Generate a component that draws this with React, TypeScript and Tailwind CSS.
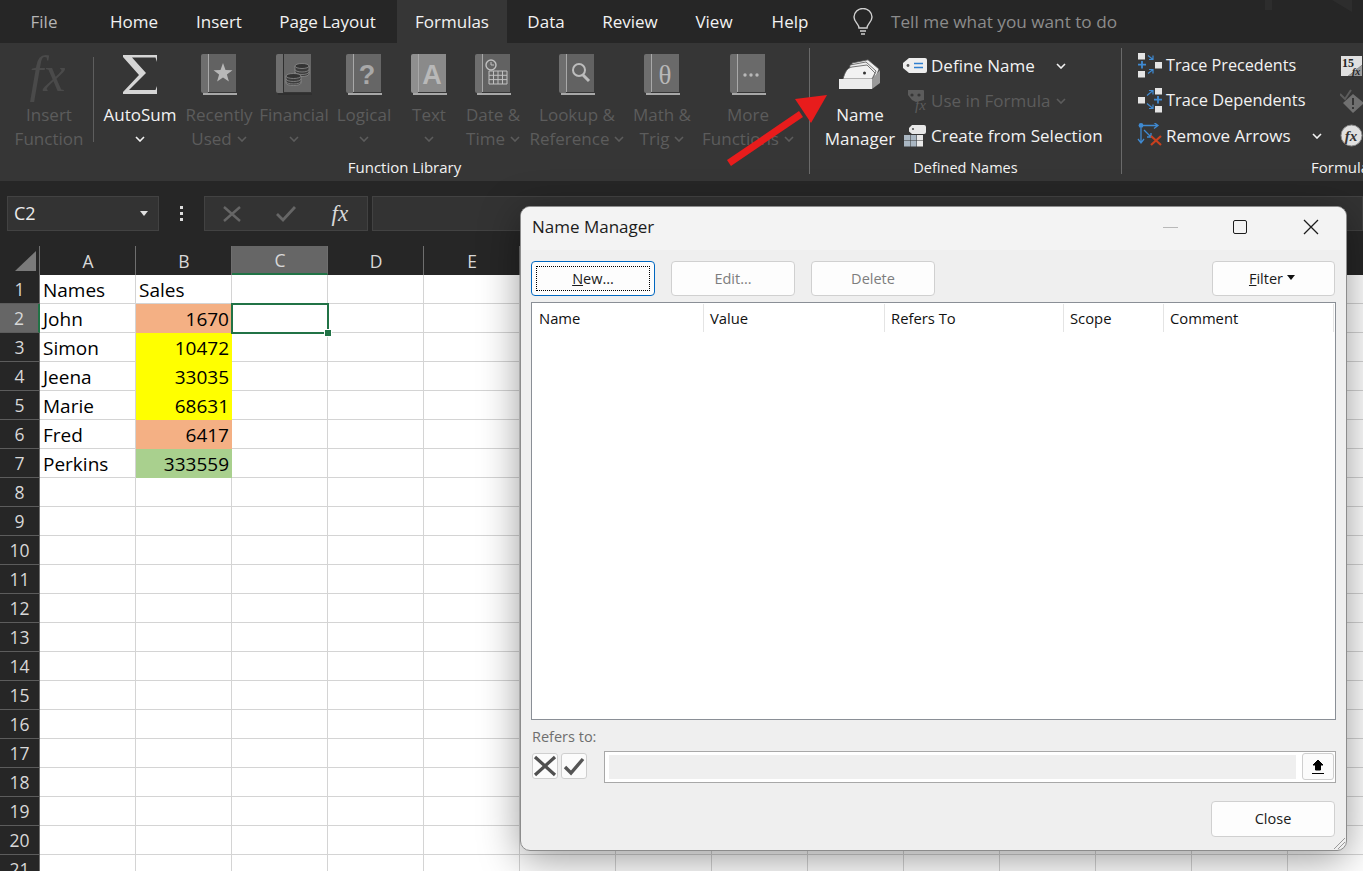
import React from "react";

const Chev = ({ c = "#e8e8e8", className = "" }: { c?: string; className?: string }) => (
  <svg width="10" height="6" viewBox="0 0 10 6" className={className} fill="none">
    <path d="M1 1l4 4 4-4" stroke={c} strokeWidth="1.6" />
  </svg>
);

const Book = ({ fill = "#626262", strip = "#6e6e6e", line = "#a8a8a8", children }: { fill?: string; strip?: string; line?: string; children?: React.ReactNode }) => (
  <svg width="36" height="41" viewBox="0 0 36 41">
    <path d="M8 0h27v38H8z" fill={fill} />
    <path d="M2 0h5v39H2a2 2 0 0 1-2-2V2a2 2 0 0 1 2-2z" fill={strip} />
    <rect x="7" y="0" width="1" height="38" fill={line} />
    <rect x="2" y="39" width="34" height="2" fill={line} />
    {children}
  </svg>
);

const BigBtn = ({ w, icon, lines, chev, dis = true }: { w: string; icon: React.ReactNode; lines: string[]; chev?: "inline" | "below"; dis?: boolean }) => {
  const color = dis ? "text-[#5c5c5c]" : "text-[#f2f2f2]";
  const cc = dis ? "#5c5c5c" : "#f2f2f2";
  return (
    <div className={`${w} shrink-0 flex flex-col items-center pt-[11px]`}>
      <div className="h-[41px] flex items-center justify-center mb-[8px]">{icon}</div>
      <div className={`text-[17px] leading-[24px] whitespace-nowrap ${color}`}>{lines[0]}</div>
      {lines[1] ? (
        <div className={`text-[17px] leading-[24px] whitespace-nowrap flex items-center gap-[5px] ${color}`}>
          {lines[1]}
          {chev === "inline" ? <Chev c={cc} /> : null}
        </div>
      ) : null}
      {chev === "below" ? (
        <div className="h-[24px] flex items-center">
          <Chev c={cc} />
        </div>
      ) : null}
    </div>
  );
};

const tabs: [string, string, string][] = [
  ["File", "w-[88px]", "text-[#b4b4b4]"],
  ["Home", "w-[92px]", "text-[#f2f2f2]"],
  ["Insert", "w-[78px]", "text-[#f2f2f2]"],
  ["Page Layout", "w-[139px]", "text-[#f2f2f2]"],
  ["Formulas", "w-[110px] bg-[#363636]", "text-[#f2f2f2]"],
  ["Data", "w-[78px]", "text-[#f2f2f2]"],
  ["Review", "w-[90px]", "text-[#f2f2f2]"],
  ["View", "w-[78px]", "text-[#f2f2f2]"],
  ["Help", "w-[74px]", "text-[#f2f2f2]"],
];

const SmallRow = ({ icon, label, dis, chevGap, size = "text-[17px]" }: { icon: React.ReactNode; label: string; dis?: boolean; chevGap?: string; size?: string }) => (
  <div className="h-[35px] flex items-center">
    <div className="w-[28px] h-[26px] shrink-0 flex items-center">{icon}</div>
    <span className={`${size} whitespace-nowrap ${dis ? "text-[#5c5c5c]" : "text-[#f2f2f2]"}`}>{label}</span>
    {chevGap ? <Chev c={dis ? "#5c5c5c" : "#f2f2f2"} className={chevGap} /> : null}
  </div>
);

const Sq = ({ x, y }: { x: number; y: number }) => <rect x={x} y={y} width="7" height="6.5" fill="#e4e4e4" />;

const TracePrec = () => (
  <svg width="26" height="26" viewBox="0 0 26 26" fill="none">
    <Sq x={1} y={0} />
    <Sq x={18} y={9} />
    <Sq x={1} y={18} />
    <path d="M5 8v7.500M1 11.700h8" stroke="#3f8ad2" strokeWidth="1.8" />
    <path d="M11 2.500l5 4M16 2.500v4h-4M11 20.500l5-4M16 20.500v-4h-4" stroke="#3f8ad2" strokeWidth="1.2" />
  </svg>
);
const TraceDep = () => (
  <svg width="26" height="26" viewBox="0 0 26 26" fill="none">
    <Sq x={18} y={0} />
    <Sq x={1} y={9} />
    <Sq x={18} y={18} />
    <path d="M21 8v7.500M17 11.700h8" stroke="#3f8ad2" strokeWidth="1.8" />
    <path d="M10 7.500l6-5M12 2.500h4v4M10 15.500l6 5M12 20.500h4v-4" stroke="#3f8ad2" strokeWidth="1.2" />
  </svg>
);
const RemoveArrows = () => (
  <svg width="26" height="26" viewBox="0 0 26 26" fill="none">
    <circle cx="4" cy="2.500" r="2.400" fill="#3f8ad2" />
    <path d="M4 2.500h17M17 -.5l4 3-4 3M4 5v14.500M1 16l3 4 3-4M7 7l7 7M14 10v4h-4" stroke="#3f8ad2" strokeWidth="1.3" />
    <path d="M14 13l10 9M24 13l-10 9" stroke="#c8401e" strokeWidth="2.200" />
  </svg>
);
const DefineIcon = () => (
  <svg width="24" height="15" viewBox="0 0 24 15" fill="none">
    <path d="M6 0h16a2 2 0 0 1 2 2v11a2 2 0 0 1-2 2H6L0 10V5z" fill="#eeeeee" />
    <circle cx="5" cy="7.500" r="1.400" fill="#555" />
    <path d="M11 5.500h9M11 9.500h9" stroke="#2f7fd0" strokeWidth="1.400" />
  </svg>
);
const UseIcon = () => (
  <svg width="24" height="26" viewBox="0 0 24 26" fill="none">
    <path d="M5 2h15a1 1 0 0 1 1 1v9l-8 2-4-2-4-5z" fill="#5c5c5c" />
    <circle cx="9" cy="7" r="1.600" fill="#363636" />
    <circle cx="16" cy="7" r="1.600" fill="#363636" />
    <text x="12" y="22" fontSize="15" fontStyle="italic" fill="#5c5c5c" fontFamily="Liberation Serif, serif">fx</text>
  </svg>
);
const CreateIcon = () => (
  <svg width="23" height="22" viewBox="0 0 23 22" fill="none">
    <path d="M9 0h12a2 2 0 0 1 2 2v5a2 2 0 0 1-2 2H9L6 6.500V3z" fill="#e8e8e8" />
    <circle cx="10" cy="4" r="1.100" fill="#555" />
    <rect x="1" y="10" width="6" height="5.500" fill="#a9b6c2" />
    <rect x="1" y="16" width="6" height="5.500" fill="#a9b6c2" />
    <rect x="7.500" y="10" width="6" height="5.500" fill="#a9b6c2" />
    <rect x="7.500" y="16" width="6" height="5.500" fill="#a9b6c2" />
    <rect x="14" y="10" width="6" height="5.500" fill="#e8e8e8" />
    <rect x="14" y="16" width="6" height="5.500" fill="#e8e8e8" />
  </svg>
);

const Ribbon = () => (
  <div className="h-[138px] bg-[#363636] flex" style={{ fontFamily: '"Open Sans", sans-serif' }}>
    <div className="w-[809px] shrink-0 flex flex-col">
      <div className="h-[113px] flex pl-[12px]">
        <BigBtn
          w="w-[74px]"
          lines={["Insert", "Function"]}
          icon={<span className="text-[50px] leading-[41px] italic text-[#4a4a4a] mr-[3px]" style={{ fontFamily: '"Liberation Serif", serif' }}>fx</span>}
        />
        <div className="ml-[7px] mr-[6px] mt-[14px] w-px h-[85px] bg-[#5e5e5e]" />
        <BigBtn
          w="w-[80px]"
          dis={false}
          chev="below"
          lines={["AutoSum"]}
          icon={
            <svg width="34" height="39" viewBox="0 0 34 39">
              <path d="M0 0H34V7L32.500 2.500H9L23 18L6 35H32.500L34 31V39H0V37L16 20L0 2Z" fill="#d6d6d6" />
            </svg>
          }
        />
        <BigBtn
          w="w-[78px]"
          chev="inline"
          lines={["Recently", "Used"]}
          icon={
            <Book>
              <path d="M22 9l2.500 7 7 .2-5.600 4.300 2 7-5.900-4.100-5.900 4.100 2-7-5.600-4.300 7-.2z" fill="#b8b8b8" />
            </Book>
          }
        />
        <BigBtn
          w="w-[72px]"
          chev="below"
          lines={["Financial"]}
          icon={
            <Book line="#2f2f2f" fill="#666666">
              <g stroke="#8c8c8c" strokeWidth=".8">
                <path d="M19 12v8a7 2.500 0 0 0 14 0v-8z" fill="#3c3c3c" />
                <ellipse cx="26" cy="12" rx="7" ry="2.500" fill="#333" />
                <path d="M19 15.500a7 2.500 0 0 0 14 0M19 18a7 2.500 0 0 0 14 0" fill="none" />
                <path d="M10 22v7a7.500 2.500 0 0 0 15 0v-7z" fill="#3c3c3c" />
                <ellipse cx="17.500" cy="22" rx="7.500" ry="2.500" fill="#333" />
                <path d="M10 25a7.500 2.500 0 0 0 15 0M10 27.500a7.500 2.500 0 0 0 15 0" fill="none" />
              </g>
            </Book>
          }
        />
        <BigBtn
          w="w-[68px]"
          chev="below"
          lines={["Logical"]}
          icon={
            <Book fill="#666666">
              <text x="21" y="30" textAnchor="middle" fontSize="27" fontWeight="700" fill="#a8a8a8" fontFamily="Liberation Sans, sans-serif">?</text>
            </Book>
          }
        />
        <BigBtn
          w="w-[62px]"
          chev="below"
          lines={["Text"]}
          icon={
            <Book fill="#8a8a8a" strip="#8f8f8f">
              <text x="21" y="30" textAnchor="middle" fontSize="27" fontWeight="700" fill="#b8b8b8" fontFamily="Liberation Sans, sans-serif">A</text>
            </Book>
          }
        />
        <BigBtn
          w="w-[66px]"
          chev="inline"
          lines={["Date &", "Time"]}
          icon={
            <Book>
              <circle cx="16" cy="11" r="5" fill="#666" stroke="#c0c0c0" strokeWidth="1.400" />
              <path d="M16 8v3h3" stroke="#c0c0c0" strokeWidth="1" fill="none" />
              <path d="M14 17h18v13H14zM14 21.300h18M14 25.600h18M18.500 17v13M23 17v13M27.500 17v13" stroke="#c0c0c0" strokeWidth="1" fill="#666" />
            </Book>
          }
        />
        <BigBtn
          w="w-[102px]"
          chev="inline"
          lines={["Lookup &", "Reference"]}
          icon={
            <Book>
              <circle cx="20" cy="16" r="6" fill="none" stroke="#bdbdbd" strokeWidth="2" />
              <path d="M24 21l6 6" stroke="#bdbdbd" strokeWidth="3" />
            </Book>
          }
        />
        <BigBtn
          w="w-[68px]"
          chev="inline"
          lines={["Math &", "Trig"]}
          icon={
            <Book fill="#6a6a6a">
              <text x="21" y="30" textAnchor="middle" fontSize="27" fill="#b8b8b8" fontFamily="Liberation Serif, serif">θ</text>
            </Book>
          }
        />
        <BigBtn
          w="w-[104px]"
          chev="inline"
          lines={["More", "Functions"]}
          icon={
            <Book fill="#6a6a6a">
              <circle cx="15" cy="21" r="1.700" fill="#b8b8b8" />
              <circle cx="21" cy="21" r="1.700" fill="#b8b8b8" />
              <circle cx="27" cy="21" r="1.700" fill="#b8b8b8" />
            </Book>
          }
        />
      </div>
      <div className="h-[24px] -mt-px text-center text-[15px] leading-[24px] text-[#f2f2f2]">Function Library</div>
    </div>
    <div className="mt-[5px] w-px h-[126px] bg-[#6a6a6a] shrink-0" />
    <div className="w-[311px] shrink-0 flex flex-col">
      <div className="h-[113px] flex pl-[7px]">
        <BigBtn
          w="w-[86px]"
          dis={false}
          lines={["Name", "Manager"]}
          icon={
            <svg width="42" height="31" viewBox="0 0 42 31">
              <path d="M13 4L29 .8 40 10l-3 8H12z" fill="#eeeeee" stroke="#555" strokeWidth=".8" />
              <path d="M11 6l16-3 10 9-3 7H10z" fill="#eeeeee" stroke="#555" strokeWidth=".8" />
              <path d="M4 20C6 13 8 9 13 8l15-2 8 8-3 6z" fill="#f2f2f2" stroke="#555" strokeWidth=".8" />
              <circle cx="25.500" cy="14" r="1.500" fill="#333" />
              <path d="M0 20h33v10H0z" fill="#ececec" />
              <path d="M33 20l8-9v13l-8 6z" fill="#9a9a9a" />
            </svg>
          }
        />
        <div className="pt-[5px]">
          <SmallRow icon={<DefineIcon />} label="Define Name" chevGap="ml-[21px]" />
          <SmallRow icon={<UseIcon />} label="Use in Formula" dis chevGap="ml-[6px]" />
          <SmallRow icon={<CreateIcon />} label="Create from Selection" />
        </div>
      </div>
      <div className="h-[24px] text-center text-[14.5px] leading-[24px] text-[#f2f2f2]">Defined Names</div>
    </div>
    <div className="mt-[5px] w-px h-[126px] bg-[#6a6a6a] shrink-0" />
    <div className="flex-1 min-w-0 overflow-hidden flex flex-col">
      <div className="h-[113px] flex pl-[15px] pt-[5px]">
        <div className="w-[203px] shrink-0">
          <SmallRow icon={<span className="block mr-[-1px]"><TracePrec /></span>} label="Trace Precedents" size="text-[16.2px] pl-px" />
          <SmallRow icon={<span className="block mr-[-1px]"><TraceDep /></span>} label="Trace Dependents" size="text-[16.4px] pl-px" />
          <SmallRow icon={<span className="block mr-[-1px]"><RemoveArrows /></span>} label="Remove Arrows" chevGap="ml-[21px]" size="text-[17px] pl-px" />
        </div>
        <div className="flex flex-col shrink-0">
          <div className="h-[35px] flex items-center">
            <svg width="22" height="22" viewBox="0 0 22 22">
              <path d="M1 1h21v9L8 21H1z" fill="#e0e0e0" />
              <path d="M22 10v11H8z" fill="#9a9a9a" />
              <text x="2" y="12" fontSize="12" fontWeight="700" fill="#222" fontFamily="Liberation Serif, serif">15</text>
              <text x="12" y="20" fontSize="10" fontStyle="italic" fontWeight="700" fill="#222" fontFamily="Liberation Serif, serif">fx</text>
            </svg>
          </div>
          <div className="h-[35px] flex items-center">
            <svg width="24" height="24" viewBox="0 0 24 24" fill="none">
              <path d="M0 5l5 5 6-9" stroke="#5c5c5c" strokeWidth="2" />
              <path d="M13 5l11 9-11 10-10-10z" fill="#707070" />
              <path d="M13 9v7M13 18v2" stroke="#363636" strokeWidth="2" />
            </svg>
          </div>
          <div className="h-[35px] flex items-center">
            <svg width="23" height="23" viewBox="0 0 23 23">
              <circle cx="11.500" cy="11.500" r="10.500" fill="#e0e0e0" stroke="#8a8a8a" />
              <text x="11" y="17" textAnchor="middle" fontSize="15" fontStyle="italic" fontWeight="700" fill="#333" fontFamily="Liberation Serif, serif">fx</text>
            </svg>
          </div>
        </div>
      </div>
      <div className="h-[24px] -mt-px pl-[189px] text-[15px] leading-[24px] text-[#f2f2f2] whitespace-nowrap">Formula Auditing</div>
    </div>
  </div>
);

const FormulaBar = () => (
  <div className="h-[65px] bg-[#262626] flex pt-[15px] pl-[7px]" style={{ fontFamily: '"Open Sans", sans-serif' }}>
    <div className="w-[152px] h-[35px] bg-[#333333] border border-[#424242] flex items-center pl-[6px] pr-[10px] justify-between">
      <span className="text-[18px] text-[#ececec]">C2</span>
      <svg width="8" height="5" viewBox="0 0 8 5"><path d="M0 0h8L4 5z" fill="#e0e0e0" /></svg>
    </div>
    <div className="w-[45px] h-[35px] flex flex-col items-center justify-center gap-[3px]">
      <span className="w-[3px] h-[3px] bg-[#ddd]" />
      <span className="w-[3px] h-[3px] bg-[#ddd]" />
      <span className="w-[3px] h-[3px] bg-[#ddd]" />
    </div>
    <div className="w-[164px] h-[35px] bg-[#333333] border border-[#424242] flex items-center">
      <div className="w-[55px] flex justify-center">
        <svg width="18" height="16" viewBox="0 0 18 16"><path d="M1 1l16 14M17 1L1 15" stroke="#666" strokeWidth="2.400" /></svg>
      </div>
      <div className="w-[54px] flex justify-center">
        <svg width="20" height="16" viewBox="0 0 20 16" fill="none"><path d="M1 8l6 6L19 1" stroke="#666" strokeWidth="2.800" /></svg>
      </div>
      <div className="w-[55px] text-center text-[23px] leading-[24px] italic text-[#d8d8d8]" style={{ fontFamily: '"Liberation Serif", serif' }}>fx</div>
    </div>
    <div className="ml-[4px] flex-1 h-[35px] bg-[#333333] border border-[#424242]" />
  </div>
);

const cols = "ABCDEFGHIJKLMNO".split("");
const data: Record<number, [string, string, string]> = {
  1: ["Names", "Sales", ""],
  2: ["John", "1670", "bg-[#f4b084]"],
  3: ["Simon", "10472", "bg-[#ffff00]"],
  4: ["Jeena", "33035", "bg-[#ffff00]"],
  5: ["Marie", "68631", "bg-[#ffff00]"],
  6: ["Fred", "6417", "bg-[#f4b084]"],
  7: ["Perkins", "333559", "bg-[#a9d08e]"],
};
const rows = Array.from({ length: 21 }, (_, i) => i + 1);

const Sheet = () => (
  <div className="bg-white" style={{ fontFamily: '"Open Sans", sans-serif' }}>
    <div className="flex h-[29px] bg-[#262626]">
      <div className="w-[40px] shrink-0 relative border-r border-[#6e6e6e]">
        <svg className="absolute left-[15px] top-[5px]" width="21" height="20" viewBox="0 0 21 20"><path d="M21 0v20H0z" fill="#7a7a7a" /></svg>
      </div>
      {cols.map((c) => (
        <div
          key={c}
          className={`w-[96px] shrink-0 flex items-center justify-center pl-px pt-[2px] text-[17.5px] text-[#d8d8d8] border-r border-[#6e6e6e] ${c === "C" ? "bg-[#666666] border-b-2 border-b-[#217346]" : ""}`}
        >
          {c}
        </div>
      ))}
    </div>
    {rows.map((r) => {
      const d = data[r];
      return (
        <div key={r} className="flex h-[29px]">
          <div className={`w-[40px] shrink-0 flex items-center justify-center pt-px text-[17.5px] text-[#d8d8d8] border-r border-b border-b-[#5c5c5c] ${r === 2 ? "bg-[#666666] border-r-2 border-r-[#217346]" : "bg-[#262626] border-r-[#6e6e6e]"}`}>
            {r}
          </div>
          {cols.map((c, i) => (
            <div
              key={c}
              className={`relative w-[96px] shrink-0 flex items-center pt-[2px] text-[19px] text-black border-b border-r border-[#d4d4d4] ${i === 1 && r > 1 && d ? `${d[2]} justify-end pr-[2px] border-r-transparent border-b-transparent` : "pl-[3px]"}`}
            >
              {d && i === 0 ? d[0] : null}
              {d && i === 1 ? d[1] : null}
              {r === 2 && c === "C" ? (
                <div className="absolute z-10 left-[-1px] top-[-1px] w-[98px] h-[31px] border-2 border-[#217346]">
                  <div className="absolute right-[-4px] bottom-[-4px] w-[6px] h-[6px] bg-[#217346] outline outline-white" />
                </div>
              ) : null}
            </div>
          ))}
        </div>
      );
    })}
  </div>
);

const WinBtn = ({ label, dis, blue, w = "w-[124px]" }: { label: React.ReactNode; dis?: boolean; blue?: boolean; w?: string }) => (
  <div className={`${w} h-[35px] rounded-[4px] bg-[#fdfdfd] flex items-center justify-center text-[14.5px] ${blue ? "border border-[#0067c0] p-[4px]" : "border border-[#d0d0d0]"} ${dis ? "text-[#7d7d7d]" : "text-[#1a1a1a]"}`}>
    {blue ? <div className="w-full h-full border border-dotted border-black flex items-center justify-center">{label}</div> : label}
  </div>
);

const headers: [string, string][] = [
  ["Name", "w-[165px]"],
  ["Value", "w-[181px] pl-[6px]"],
  ["Refers To", "w-[179px] pl-[6px]"],
  ["Scope", "w-[100px] pl-[6px]"],
  ["Comment", "w-[170px] pl-[6px]"],
];

const Dialog = () => (
  <div
    className="absolute left-[520px] top-[206px] w-[827px] h-[645px] rounded-[10px] bg-[#efefef] border border-[#8c8c8c] shadow-[0_8px_40px_rgba(0,0,0,0.4)] overflow-hidden flex flex-col"
    style={{ fontFamily: '"Open Sans", sans-serif' }}
  >
    <div className="h-[43px] shrink-0 bg-[#f3f3f3] flex items-center pl-[11px] pb-[3px]">
      <span className="text-[17px] text-[#1c1c1c] flex-1">Name Manager</span>
      <div className="w-[15px] h-px bg-[#b8b8b8] mr-[55px]" />
      <div className="w-[14px] h-[14px] border-[1.5px] border-[#1c1c1c] rounded-[2px] mr-[56px]" />
      <svg width="16" height="16" viewBox="0 0 16 16" className="mr-[27px]"><path d="M1 1l14 14M15 1L1 15" stroke="#1c1c1c" strokeWidth="1.300" /></svg>
    </div>
    <div className="flex-1 px-[10px] pt-[11px] flex flex-col">
      <div className="flex h-[35px]">
        <WinBtn blue label={<span><span className="underline">N</span>ew...</span>} />
        <div className="w-[16px]" />
        <WinBtn dis label="Edit..." />
        <div className="w-[16px]" />
        <WinBtn dis label="Delete" />
        <div className="flex-1" />
        <div className="mr-px flex items-center">
          <WinBtn
            w="w-[123px]"
            label={
              <span className="flex items-center gap-[4px] pr-[3px]">
                <span><span className="underline">F</span>ilter</span>
                <svg width="8" height="5" viewBox="0 0 8 5" className="mb-[3px]"><path d="M0 0h8L4 5z" fill="#111" /></svg>
              </span>
            }
          />
        </div>
      </div>
      <div className="mt-[6px] h-[418px] bg-white border border-[#8a8f96] pl-[7px] pt-[1px]">
        <div className="flex h-[28px]">
          {headers.map(([h, w]) => (
            <div key={h} className={`${w} shrink-0 flex items-center text-[14.8px] text-[#111] border-r border-[#e4e4e4]`}>
              <span className="whitespace-nowrap">{h}</span>
            </div>
          ))}
        </div>
      </div>
      <div className="mt-[6px] h-[22px] flex items-center text-[14.5px] text-[#6e6e6e] pl-px">Refers to:</div>
      <div className="mt-[3px] flex h-[32px]">
        <div className="pl-px pt-[2px] flex gap-[3px]">
          <div className="w-[26px] h-[26px] rounded-[3px] bg-[#fbfbfb] border border-[#cfcfcf] flex items-center justify-center">
            <svg width="24" height="22" viewBox="0 0 24 22"><path d="M2 2l20 18M22 2L2 20" stroke="#4f4f4f" strokeWidth="3.200" /></svg>
          </div>
          <div className="w-[26px] h-[26px] rounded-[3px] bg-[#fbfbfb] border border-[#cfcfcf] flex items-center justify-center">
            <svg width="22" height="20" viewBox="0 0 22 20" fill="none"><path d="M2 11l6 6L20 3" stroke="#555" strokeWidth="3.400" /></svg>
          </div>
        </div>
        <div className="ml-[17px] flex-1 border border-[#a8a8a8] bg-white flex items-stretch pl-[4px] py-[3px]">
          <div className="flex-1 bg-[#efefef]" />
          <div className="ml-[6px] w-[32px] mr-[1px] -mt-[2px] -mb-[1px] rounded-[3px] bg-[#fbfbfb] border border-[#cfcfcf] flex items-center justify-center">
            <svg width="14" height="16" viewBox="0 0 14 16"><path d="M7 1l5 5H9.500v5h-5V6H2z" fill="#000" stroke="#000" /><path d="M1 14.500h12" stroke="#000" /></svg>
          </div>
        </div>
      </div>
      <div className="mt-[18px] flex justify-end pr-px">
        <WinBtn w="w-[124px] !h-[36px]" label="Close" />
      </div>
    </div>
    <svg className="absolute right-0 bottom-0" width="13" height="13" viewBox="0 0 13 13">
      <path d="M1 12L12 1M5 12l7-7M9 12l3-3" stroke="#9a9a9a" strokeWidth="1" />
    </svg>
  </div>
);

export default function App() {
  return (
    <div className="relative w-[1363px] h-[871px] overflow-hidden bg-white">
      <div className="h-[43px] bg-[#262626] flex items-center" style={{ fontFamily: '"Open Sans", sans-serif' }}>
        {tabs.map(([t, w, c]) => (
          <div key={t} className={`${w} h-full shrink-0 flex items-center justify-center text-[17px] ${c}`}>{t}</div>
        ))}
        <svg width="20" height="28" viewBox="0 0 20 28" fill="none" className="ml-[26px] mr-[18px]">
          <path d="M6 20c0-4-5-6-5-11a9 8.500 0 0 1 18 0c0 5-5 7-5 11z" stroke="#d0d0d0" strokeWidth="1.400" />
          <path d="M7 23h6M8 26h4" stroke="#d0d0d0" strokeWidth="1.600" />
        </svg>
        <span className="text-[17.2px] text-[#8c8c8c] whitespace-nowrap">Tell me what you want to do</span>
      </div>
      <Ribbon />
      <FormulaBar />
      <Sheet />
      <Dialog />
      <svg className="absolute left-[1260px] top-0" width="100" height="12" viewBox="0 0 100 12">
        <path d="M5 0h7v10H5zM72 0h20v12z" fill="#2d2d2d" />
      </svg>
      <svg className="absolute left-[720px] top-[88px]" width="115" height="82" viewBox="720 88 115 82">
        <path d="M729 163l72-49" stroke="#e81c1c" strokeWidth="7" />
        <path d="M827 95l-32 4 16 24z" fill="#e81c1c" />
      </svg>
    </div>
  );
}
